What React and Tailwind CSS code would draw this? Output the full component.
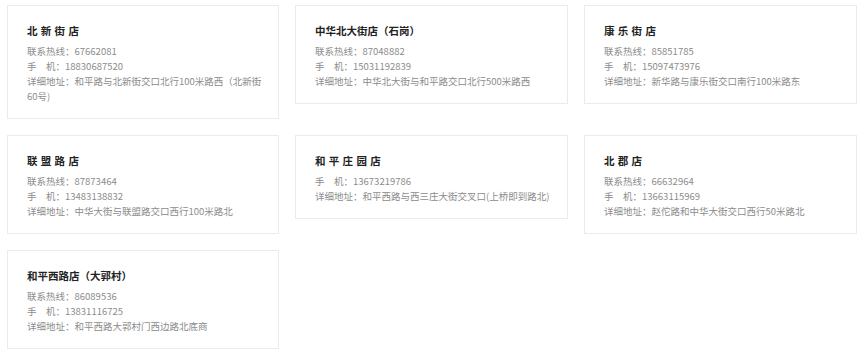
import React from 'react';

const stores = [
  {
    name: '北新街店',
    spaced: true,
    tel: '67662081',
    mobile: '18830687520',
    address: ['和平路与北新街交口北行100米路西（北新街', '60号)'],
  },
  {
    name: '中华北大街店（石岗）',
    tel: '87048882',
    mobile: '15031192839',
    address: ['中华北大街与和平路交口北行500米路西'],
  },
  {
    name: '康乐街店',
    spaced: true,
    tel: '85851785',
    mobile: '15097473976',
    address: ['新华路与康乐街交口南行100米路东'],
  },
  {
    name: '联盟路店',
    spaced: true,
    tel: '87873464',
    mobile: '13483138832',
    address: ['中华大街与联盟路交口西行100米路北'],
  },
  {
    name: '和平庄园店',
    spaced: true,
    mobile: '13673219786',
    address: ['和平西路与西三庄大街交叉口(上桥即到路北)'],
  },
  {
    name: '北郡店',
    spaced: true,
    tel: '66632964',
    mobile: '13663115969',
    address: ['赵佗路和中华大街交口西行50米路北'],
  },
  {
    name: '和平西路店（大郭村）',
    tel: '86089536',
    mobile: '13831116725',
    address: ['和平西路大郭村门西边路北底商'],
  },
];

const StoreCard = ({ store }) => {
  return (
    <div className="border border-[#ebebeb] bg-white pl-[19px] pr-[10px] pt-[15px] pb-[14px]">
      <h3
        className={
          'text-[10.5px] leading-[20px] font-bold text-[#222] mb-[3px] ' +
          (store.spaced ? 'tracking-[3.3px]' : 'tracking-normal')
        }
      >
        {store.name}
      </h3>
      <div className="text-[9.5px] leading-[15px] text-[#8c8c8c]">
        {store.tel && <p>联系热线：{store.tel}</p>}
        <p>手　机：{store.mobile}</p>
        <p>
          详细地址：
          {store.address.map((line, i) => (
            <React.Fragment key={i}>
              {i > 0 && <br />}
              {line}
            </React.Fragment>
          ))}
        </p>
      </div>
    </div>
  );
};

export default function App() {
  return (
    <div
      className="min-h-[355px] w-full bg-white pl-[7px] pt-[5px]"
      style={{ fontFamily: '"Noto Sans CJK SC", "Noto Sans", sans-serif' }}
    >
      <div className="grid grid-cols-[272px_273px_273px] gap-x-[16px] gap-y-[16px] items-start">
        {stores.map((store, index) => (
          <StoreCard key={index} store={store} />
        ))}
      </div>
    </div>
  );
}
